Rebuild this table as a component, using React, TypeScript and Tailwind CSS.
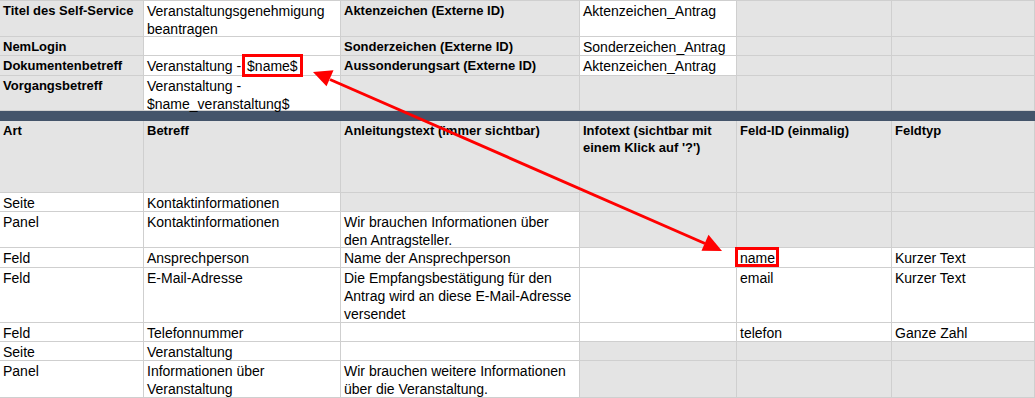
import React from "react";

const COLS = "grid grid-cols-[144px_197px_239px_157px_155px_143px] grid-rows-[100%]";
const GREY = "bg-[#e4e4e4]";
const WHITE = "bg-white";

type CellProps = {
  bg?: string;
  bold?: boolean;
  children?: React.ReactNode;
};

function Cell({ bg = GREY, bold = false, children }: CellProps) {
  return (
    <div
      className={
        "min-h-0 border-r border-b border-[#cfcfcf] pl-[3px] pr-[2px] pt-px whitespace-nowrap " +
        bg +
        " " +
        (bold ? "font-bold text-[13px] leading-[17px]" : "text-[14px] leading-[18px]")
      }
    >
      {children}
    </div>
  );
}

function Row({ h, children }: { h: string; children: React.ReactNode }) {
  return <div className={COLS + " " + h}>{children}</div>;
}

function Boxed({ children, cls }: { children: React.ReactNode; cls: string }) {
  return (
    <span className="relative">
      {children}
      <span className={"absolute border-[3px] border-[#ff0000] z-10 " + cls} />
    </span>
  );
}

export default function App() {
  return (
    <div className="relative w-[1035px] h-[398px] bg-white overflow-hidden text-black font-['Liberation_Sans',Arial,sans-serif]">
      <div className="border-t border-[#cfcfcf]">
        {/* top section */}
        <Row h="h-[36px]">
          <Cell bold>Titel des Self-Service</Cell>
          <Cell bg={WHITE}>
            Veranstaltungsgenehmigung
            <br />
            beantragen
          </Cell>
          <Cell bold>Aktenzeichen (Externe ID)</Cell>
          <Cell bg={WHITE}>Aktenzeichen_Antrag</Cell>
          <Cell />
          <Cell />
        </Row>
        <Row h="h-[19px]">
          <Cell bold>NemLogin</Cell>
          <Cell bg={WHITE} />
          <Cell bold>Sonderzeichen (Externe ID)</Cell>
          <Cell bg={WHITE}>Sonderzeichen_Antrag</Cell>
          <Cell />
          <Cell />
        </Row>
        <Row h="h-[20px]">
          <Cell bold>Dokumentenbetreff</Cell>
          <Cell bg={WHITE}>
            Veranstaltung -{" "}
            <span className="ml-[2px]">
              <Boxed cls="-left-[5px] -right-[5px] -top-[4px] -bottom-[3px]">$name$</Boxed>
            </span>
          </Cell>
          <Cell bold>Aussonderungsart (Externe ID)</Cell>
          <Cell bg={WHITE}>Aktenzeichen_Antrag</Cell>
          <Cell />
          <Cell />
        </Row>
        <Row h="h-[35px]">
          <Cell bold>Vorgangsbetreff</Cell>
          <Cell bg={WHITE}>
            Veranstaltung -
            <br />
            $name_veranstaltung$
          </Cell>
          <Cell />
          <Cell />
          <Cell />
          <Cell />
        </Row>

        {/* dark band */}
        <div className="h-[10px] bg-[#44546a]" />

        {/* lower section */}
        <Row h="h-[72px]">
          <Cell bold>Art</Cell>
          <Cell bold>Betreff</Cell>
          <Cell bold>Anleitungstext (immer sichtbar)</Cell>
          <Cell bold>
            Infotext (sichtbar mit
            <br />
            einem Klick auf &apos;?&apos;)
          </Cell>
          <Cell bold>Feld-ID (einmalig)</Cell>
          <Cell bold>Feldtyp</Cell>
        </Row>
        <Row h="h-[19px]">
          <Cell bg={WHITE}>Seite</Cell>
          <Cell bg={WHITE}>Kontaktinformationen</Cell>
          <Cell />
          <Cell />
          <Cell />
          <Cell />
        </Row>
        <Row h="h-[36px]">
          <Cell bg={WHITE}>Panel</Cell>
          <Cell bg={WHITE}>Kontaktinformationen</Cell>
          <Cell bg={WHITE}>
            Wir brauchen Informationen über
            <br />
            den Antragsteller.
          </Cell>
          <Cell />
          <Cell />
          <Cell />
        </Row>
        <Row h="h-[20px]">
          <Cell bg={WHITE}>Feld</Cell>
          <Cell bg={WHITE}>Ansprechperson</Cell>
          <Cell bg={WHITE}>Name der Ansprechperson</Cell>
          <Cell bg={WHITE} />
          <Cell bg={WHITE}>
            <Boxed cls="-left-[5px] -right-[4px] -top-[3px] -bottom-[1px]">name</Boxed>
          </Cell>
          <Cell bg={WHITE}>Kurzer Text</Cell>
        </Row>
        <Row h="h-[55px]">
          <Cell bg={WHITE}>Feld</Cell>
          <Cell bg={WHITE}>E-Mail-Adresse</Cell>
          <Cell bg={WHITE}>
            Die Empfangsbestätigung für den
            <br />
            Antrag wird an diese E-Mail-Adresse
            <br />
            versendet
          </Cell>
          <Cell bg={WHITE} />
          <Cell bg={WHITE}>email</Cell>
          <Cell bg={WHITE}>Kurzer Text</Cell>
        </Row>
        <Row h="h-[19px]">
          <Cell bg={WHITE}>Feld</Cell>
          <Cell bg={WHITE}>Telefonnummer</Cell>
          <Cell bg={WHITE} />
          <Cell bg={WHITE} />
          <Cell bg={WHITE}>telefon</Cell>
          <Cell bg={WHITE}>Ganze Zahl</Cell>
        </Row>
        <Row h="h-[19px]">
          <Cell bg={WHITE}>Seite</Cell>
          <Cell bg={WHITE}>Veranstaltung</Cell>
          <Cell bg={WHITE} />
          <Cell />
          <Cell />
          <Cell />
        </Row>
        <Row h="h-[37px]">
          <Cell bg={WHITE}>Panel</Cell>
          <Cell bg={WHITE}>
            Informationen über
            <br />
            Veranstaltung
          </Cell>
          <Cell bg={WHITE}>
            Wir brauchen weitere Informationen
            <br />
            über die Veranstaltung.
          </Cell>
          <Cell />
          <Cell />
          <Cell />
        </Row>
      </div>

      {/* double-headed arrow annotation */}
      <svg
        className="absolute inset-0 pointer-events-none z-20"
        width="1035"
        height="398"
        viewBox="0 0 1035 398"
      >
        <line x1="330" y1="79.5" x2="705" y2="243.5" stroke="#ff0000" strokeWidth="3" />
        <polygon points="313,72 326.5,86.2 333.5,70.2" fill="#ff0000" />
        <polygon points="722,251 701.5,250.8 708.5,234.8" fill="#ff0000" />
      </svg>
    </div>
  );
}
